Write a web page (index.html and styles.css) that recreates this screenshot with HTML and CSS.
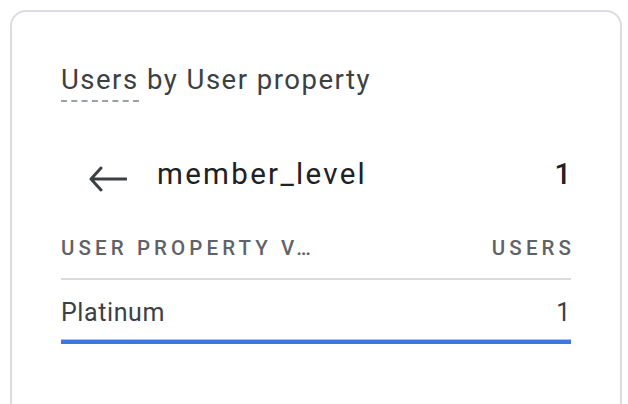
FILE: index.html
```html
<!DOCTYPE html>
<html>
<head>
<meta charset="utf-8">
<link rel="stylesheet" href="styles.css">
</head>
<body>
<div class="card">
  <div class="title"><span class="dashed">Users</span> by User property</div>
  <div class="drill">
    <svg class="back" width="38" height="26" viewBox="0 0 38 26">
      <path d="M12 2 L2 13 L12 24 M2 13 H37" fill="none" stroke="#3c4043" stroke-width="3" stroke-linecap="round" stroke-linejoin="round"/>
    </svg>
    <span class="dim">member_level</span>
    <span class="total">1</span>
  </div>
  <div class="thead">
    <span>User property v…</span>
    <span class="last">Users</span>
  </div>
  <div class="row">
    <span>Platinum</span>
    <span>1</span>
  </div>
  <div class="bar"></div>
</div>
</body>
</html>
```
FILE: styles.css
```css
html, body {
  margin: 0;
  padding: 0;
  background: #ffffff;
}
body {
  font-family: Roboto, "Liberation Sans", sans-serif;
  width: 628px;
  height: 404px;
  overflow: hidden;
}
.card {
  margin: 10px 0 0 10px;
  width: 510px;
  height: 342px;
  border: 2px solid #dadce0;
  border-bottom: none;
  border-radius: 16px 16px 0 0;
  padding: 50px 49px 0 49px;
}
.title {
  font-size: 27.5px;
  color: #3c4043;
  letter-spacing: 1.5px;
  line-height: 36px;
}
.dashed {
  border-bottom: 2px dashed #9aa0a6;
  padding-bottom: 4px;
}
.drill {
  display: flex;
  align-items: center;
  margin-top: 56px;
  height: 40px;
}
.back {
  margin-left: 28px;
  margin-right: 30px;
  margin-top: 10px;
}
.dim {
  font-size: 29.5px;
  color: #202124;
  letter-spacing: 2.3px;
}
.total {
  margin-left: auto;
  font-size: 29px;
  font-weight: 500;
  color: #202124;
}
.thead {
  display: flex;
  justify-content: space-between;
  text-transform: uppercase;
  font-size: 20.5px;
  letter-spacing: 4.1px;
  color: #5f6368;
  font-weight: 500;
  margin-top: 42px;
  padding-bottom: 18px;
  border-bottom: 2px solid #dadce0;
}
.last {
  margin-right: -4.1px;
}
.row {
  display: flex;
  justify-content: space-between;
  font-size: 25px;
  letter-spacing: 0.6px;
  color: #3c4043;
  margin-top: 18px;
}
.bar {
  height: 4px;
  background: #3b78e7;
  border-top: 1px solid #a8c4f5;
  margin-top: 12px;
}
```
